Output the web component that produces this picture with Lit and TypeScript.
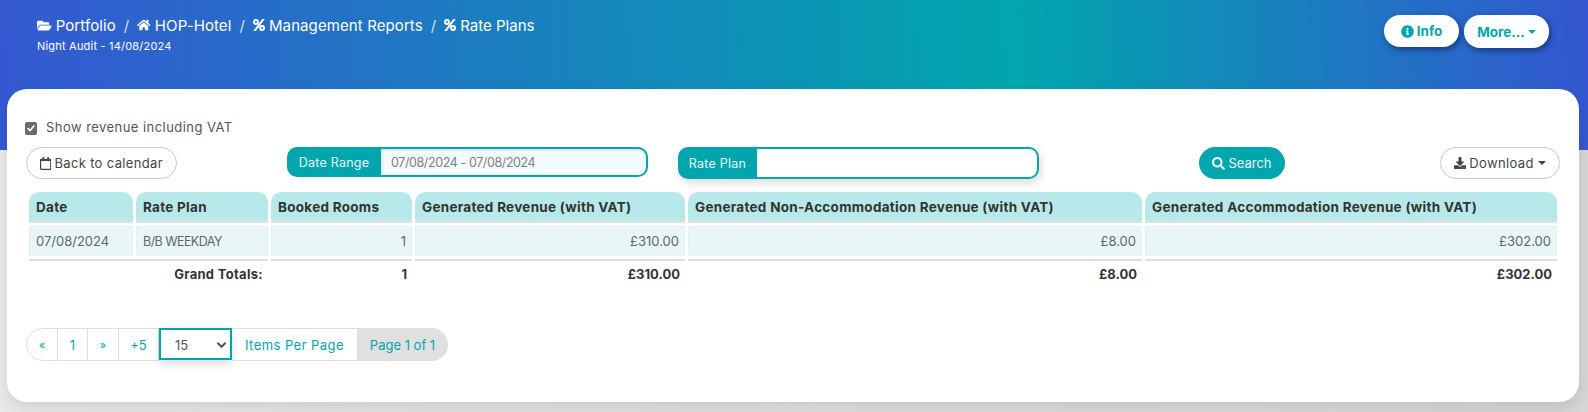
import { LitElement, html, css, svg } from 'lit';
import { customElement } from 'lit/decorators.js';

const ICONS = {
  folder: ['0 0 576 512', 'M572.694 292.093L500.27 416.248A63.997 63.997 0 0 1 444.989 448H45.025c-18.523 0-30.064-20.093-20.731-36.093l72.424-124.155A64 64 0 0 1 152 256h399.964c18.523 0 30.064 20.093 20.73 36.093zM152 224h328v-48c0-26.51-21.49-48-48-48H272l-64-64H48C21.49 64 0 85.49 0 112v278.046l69.077-118.418C86.214 242.25 117.989 224 152 224z'],
  home: ['0 0 576 512', 'M280.37 148.26L96 300.11V464a16 16 0 0 0 16 16l112.06-.29a16 16 0 0 0 15.92-16V368a16 16 0 0 1 16-16h64a16 16 0 0 1 16 16v95.64a16 16 0 0 0 16 16.05L464 480a16 16 0 0 0 16-16V300L295.67 148.26a12.19 12.19 0 0 0-15.3 0zM571.6 251.47L488 182.56V44.05a12 12 0 0 0-12-12h-56a12 12 0 0 0-12 12v72.61L318.47 43a48 48 0 0 0-61 0L4.34 251.47a12 12 0 0 0-1.6 16.9l25.5 31A12 12 0 0 0 45.15 301l235.22-193.74a12.19 12.19 0 0 1 15.3 0L530.9 301a12 12 0 0 0 16.9-1.6l25.5-31a12 12 0 0 0-1.7-16.93z'],
  percent: ['0 0 448 448', 'M0 110a110 110 0 1 0 220 0a110 110 0 1 0-220 0zM72 110a38 38 0 1 1 76 0a38 38 0 1 1-76 0zM228 338a110 110 0 1 0 220 0a110 110 0 1 0-220 0zM300 338a38 38 0 1 1 76 0a38 38 0 1 1-76 0zM345 0h95L103 448H8z'],
  info: ['0 0 512 512', 'M256 8C119.043 8 8 119.083 8 256c0 136.997 111.043 248 248 248s248-111.003 248-248C504 119.083 392.957 8 256 8zm0 110c23.196 0 42 18.804 42 42s-18.804 42-42 42-42-18.804-42-42 18.804-42 42-42zm56 254c0 6.627-5.373 12-12 12h-88c-6.627 0-12-5.373-12-12v-24c0-6.627 5.373-12 12-12h12v-64h-12c-6.627 0-12-5.373-12-12v-24c0-6.627 5.373-12 12-12h64c6.627 0 12 5.373 12 12v100h12c6.627 0 12 5.373 12 12v24z'],
  search: ['0 0 512 512', 'M505 442.7L405.3 343c-4.5-4.5-10.6-7-17-7H372c27.6-35.3 44-79.7 44-128C416 93.1 322.9 0 208 0S0 93.1 0 208s93.1 208 208 208c48.3 0 92.7-16.4 128-44v16.3c0 6.4 2.5 12.5 7 17l99.7 99.7c9.4 9.4 24.6 9.4 33.9 0l28.3-28.3c9.4-9.4 9.4-24.6.1-34zM208 336c-70.7 0-128-57.2-128-128 0-70.7 57.2-128 128-128 70.7 0 128 57.2 128 128 0 70.7-57.2 128-128 128z'],
  download: ['0 0 512 512', 'M216 0h80c13.3 0 24 10.7 24 24v168h87.7c17.8 0 26.7 21.5 14.1 34.1L269.7 378.3c-7.5 7.5-19.8 7.5-27.3 0L90.1 226.1c-12.6-12.6-3.7-34.1 14.1-34.1H192V24c0-13.3 10.7-24 24-24zm296 376v112c0 13.3-10.7 24-24 24H24c-13.3 0-24-10.7-24-24V376c0-13.3 10.7-24 24-24h146.7l49 49c20.1 20.1 52.5 20.1 72.6 0l49-49H488c13.3 0 24 10.7 24 24zm-124 88c0-11-9-20-20-20s-20 9-20 20 9 20 20 20 20-9 20-20zm64 0c0-11-9-20-20-20s-20 9-20 20 9 20 20 20 20-9 20-20z'],
  calendar: ['0 0 448 512', 'M400 64h-48V12c0-6.6-5.4-12-12-12h-40c-6.6 0-12 5.4-12 12v52H160V12c0-6.6-5.4-12-12-12h-40c-6.6 0-12 5.4-12 12v52H48C21.5 64 0 85.5 0 112v352c0 26.5 21.5 48 48 48h352c26.5 0 48-21.5 48-48V112c0-26.5-21.5-48-48-48zm-6 400H54c-3.3 0-6-2.7-6-6V160h352v298c0 3.3-2.7 6-6 6z'],
} as const;

const icon = (name: keyof typeof ICONS, size: number) => {
  const [box, d] = ICONS[name];
  return html`<svg class="ico" viewBox=${box} height=${size} fill="currentColor">${svg`<path d=${d}></path>`}</svg>`;
};

const crumbs: [keyof typeof ICONS, string, number][] = [
  ['folder', 'Portfolio', 13],
  ['home', 'HOP-Hotel', 12],
  ['percent', 'Management Reports', 12],
  ['percent', 'Rate Plans', 12],
];

const columns = [
  { label: 'Date', width: 104 },
  { label: 'Rate Plan', width: 132 },
  { label: 'Booked Rooms', width: 141 },
  { label: 'Generated Revenue (with VAT)', width: 270 },
  { label: 'Generated Non-Accommodation Revenue (with VAT)', width: 454 },
  { label: 'Generated Accommodation Revenue (with VAT)', width: 412 },
];

@customElement('app-root')
export class AppRoot extends LitElement {
  static styles = css`
    :host {
      display: block;
      height: 412px;
      overflow: hidden;
      background: linear-gradient(90deg, #e9e9e9, #d6d6d6);
      font-family: Inter, 'Liberation Sans', sans-serif;
      color: #444;
    }
    .ico { display: block; flex: none; }
    .header {
      height: 150px;
      box-sizing: border-box;
      padding: 15px 39px 0 37px;
      display: flex;
      justify-content: space-between;
      background: linear-gradient(87deg, #3558d2 0%, #00a6ad 64%, #3457d1 100%);
      color: #fff;
    }
    .crumbs { display: flex; align-items: center; font-size: 15px; height: 20px; letter-spacing: 0.1px; }
    .crumb { display: flex; align-items: center; gap: 4px; }
    .crumb:last-child { letter-spacing: 0; }
    .sep { margin: 0 8px; opacity: 0.8; }
    .audit { font-size: 11px; margin-top: 4px; letter-spacing: 0.2px; }
    .top-actions { display: flex; gap: 5px; align-items: flex-start; }
    .top-btn {
      display: flex;
      align-items: center;
      justify-content: center;
      gap: 3px;
      height: 32px;
      background: #fff;
      color: #00a5ae;
      font-weight: 700;
      font-size: 13.5px;
      border-radius: 16px;
      box-shadow: 2px 3px 6px rgba(0, 20, 70, 0.5);
    }
    .top-btn.info { width: 75px; }
    .top-btn.more { width: 85px; height: 33px; }
    .caret {
      width: 0;
      height: 0;
      border: 4px solid transparent;
      border-top-color: currentColor;
      border-bottom: 0;
    }
    .card {
      margin: -61px 9px 0 7px;
      height: 313px;
      box-sizing: border-box;
      padding: 32px 18px 0 18px;
      background: #fff;
      border-radius: 20px;
      box-shadow: 0 6px 14px rgba(0, 0, 0, 0.1);
      position: relative;
    }
    .vat { display: flex; align-items: center; gap: 9px; font-size: 13px; height: 14px; color: #555; letter-spacing: 0.45px; }
    .vat .text { margin-bottom: 2px; }
    .vat .box {
      width: 12px;
      height: 13px;
      background: #6b6b6b;
      border-radius: 2px;
      display: flex;
      align-items: center;
      justify-content: center;
    }
    .toolbar { display: flex; margin-top: 12px; height: 32px; align-items: flex-start; }
    .outline {
      display: flex;
      align-items: center;
      justify-content: center;
      gap: 3px;
      height: 32px;
      box-sizing: border-box;
      border: 1px solid #c9c9c9;
      border-radius: 16px;
      font-size: 13px;
      color: #444;
      letter-spacing: 0.35px;
    }
    .back { width: 151px; margin-left: 1px; }
    .group {
      display: flex;
      box-sizing: border-box;
      border-radius: 10px;
      background: #00a5ae;
      font-size: 12.5px;
      color: #e8fbfb;
    }
    .group .label { display: flex; align-items: center; justify-content: center; letter-spacing: 0.25px; }
    .group .field {
      flex: 1;
      display: flex;
      align-items: center;
      margin: 2px 2px 2px 0;
      border-radius: 0 8px 8px 0;
      padding-left: 10px;
      background: #fff;
      color: #808080;
      letter-spacing: -0.4px;
    }
    .date { width: 361px; height: 30px; margin-left: 110px; }
    .date .label { width: 94px; }
    .date .field { background: #f3fbfe; box-shadow: inset 1px 1px 3px rgba(0, 0, 0, 0.12); }
    .plan { width: 361px; height: 32px; margin-left: 30px; box-shadow: 2px 4px 8px rgba(0, 0, 0, 0.14); }
    .plan .label { width: 79px; }
    .search {
      width: 86px;
      height: 32px;
      margin-left: 160px;
      display: flex;
      align-items: center;
      justify-content: center;
      gap: 3px;
      background: #00a5ae;
      color: #e8fbfb;
      border-radius: 16px;
      font-size: 13px;
    }
    .download { width: 120px; margin-left: auto; margin-right: 1px; }
    .download .caret { margin-left: 1px; }
    table {
      margin: 10px 0 0 1px;
      border-collapse: separate;
      border-spacing: 3px;
      table-layout: fixed;
      width: 1534px;
      font-size: 13px;
    }
    th {
      height: 29px;
      padding: 0 7px;
      background: #b8e9ea;
      border-bottom: 2px solid #e0e0e0;
      border-radius: 10px 10px 0 0;
      text-align: left;
      font-size: 13.5px;
      letter-spacing: 0.28px;
      font-weight: 700;
      color: #333;
      white-space: nowrap;
    }
    td { padding: 0 5px; white-space: nowrap; }
    tbody td {
      height: 28px;
      background: #e8f6f7;
      border: 1px solid #e4f1f2;
      color: #666;
      text-align: right;
    }
    tbody td.txt { text-align: left; padding-left: 6px; }
    tbody td.plan-name { font-size: 12.5px; letter-spacing: -0.55px; }
    tfoot td {
      height: 26px;
      border-top: 2px solid #ddd;
      font-weight: 700;
      color: #333;
      text-align: right;
    }
    tfoot td.grand { letter-spacing: 0.3px; }
    .pager {
      display: inline-flex;
      height: 33px;
      margin: 38px 0 0 1px;
      box-sizing: border-box;
      font-size: 13px;
      color: #00a5ae;
    }
    .cell {
      display: flex;
      align-items: center;
      justify-content: center;
      box-sizing: border-box;
      border: 1px solid #dedede;
      border-left: 0;
    }
    .cell.first { border-left: 1px solid #dedede; border-radius: 17px 0 0 17px; width: 32px; font-size: 11px; }
    .cell.one { width: 30px; }
    .cell.next { width: 31px; font-size: 11px; }
    .cell.plus { width: 40px; }
    .cell.ipp { width: 126px; letter-spacing: 0.45px; }
    .cell.page { width: 90px; background: #e0e0e0; border-radius: 0 17px 17px 0; }
    .select {
      display: flex;
      align-items: center;
      justify-content: space-between;
      box-sizing: border-box;
      width: 73px;
      height: 32px;
      padding: 2px 3px 0 14px;
      border: 2px solid #00a5ae;
      color: #555;
      background: #fff;
      box-shadow: 0 4px 8px rgba(0, 0, 0, 0.14);
    }
  `;

  render() {
    return html`
      <div class="header">
        <div>
          <div class="crumbs">
            ${crumbs.map(
              ([ico, text, size], i) => html`
                ${i ? html`<span class="sep">/</span>` : ''}
                <span class="crumb">${icon(ico, size)}${text}</span>
              `
            )}
          </div>
          <div class="audit">Night Audit - 14/08/2024</div>
        </div>
        <div class="top-actions">
          <div class="top-btn info">${icon('info', 13)}Info</div>
          <div class="top-btn more">More...<span class="caret"></span></div>
        </div>
      </div>
      <div class="card">
        <div class="vat">
          <span class="box">
            <svg viewBox="0 0 12 12" width="10" height="10"><path d="M2 6.2 4.8 9 10 3" fill="none" stroke="#fff" stroke-width="2"></path></svg>
          </span>
          <span class="text">Show revenue including VAT</span>
        </div>
        <div class="toolbar">
          <div class="outline back">${icon('calendar', 13)}Back to calendar</div>
          <div class="group date">
            <div class="label">Date Range</div>
            <div class="field">07/08/2024 - 07/08/2024</div>
          </div>
          <div class="group plan">
            <div class="label">Rate Plan</div>
            <div class="field"></div>
          </div>
          <div class="search">${icon('search', 13)}Search</div>
          <div class="outline download">${icon('download', 12)}Download<span class="caret"></span></div>
        </div>
        <table>
          <colgroup>${columns.map((c) => html`<col style="width:${c.width}px" />`)}</colgroup>
          <thead>
            <tr>${columns.map((c) => html`<th>${c.label}</th>`)}</tr>
          </thead>
          <tbody>
            <tr>
              <td class="txt">07/08/2024</td>
              <td class="txt plan-name">B/B WEEKDAY</td>
              <td>1</td>
              <td>£310.00</td>
              <td>£8.00</td>
              <td>£302.00</td>
            </tr>
          </tbody>
          <tfoot>
            <tr>
              <td class="grand" colspan="2">Grand Totals:</td>
              <td>1</td>
              <td>£310.00</td>
              <td>£8.00</td>
              <td>£302.00</td>
            </tr>
          </tfoot>
        </table>
        <div class="pager">
          <div class="cell first">«</div>
          <div class="cell one">1</div>
          <div class="cell next">»</div>
          <div class="cell plus">+5</div>
          <div class="select">
            15
            <svg viewBox="0 0 12 8" width="11" height="8"><path d="M1.5 1.5 6 6l4.500-4.500" fill="none" stroke="#555" stroke-width="2.200"></path></svg>
          </div>
          <div class="cell ipp">Items Per Page</div>
          <div class="cell page">Page 1 of 1</div>
        </div>
      </div>
    `;
  }
}
